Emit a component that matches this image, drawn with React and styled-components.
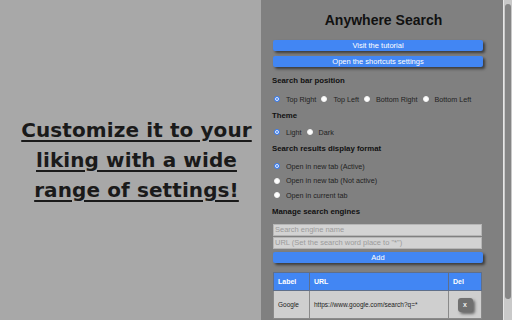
import styled, { createGlobalStyle } from 'styled-components';

const GlobalStyle = createGlobalStyle`
  html, body {
    margin: 0;
    padding: 0;
    width: 512px;
    height: 320px;
    overflow: hidden;
    background: #a8a8a8;
  }
`;

const Page = styled.div`
  display: flex;
  width: 512px;
  height: 320px;
`;

const Promo = styled.div`
  width: 261px;
  display: flex;
  align-items: center;
  justify-content: center;
  background: #a8a8a8;
`;

const PromoText = styled.h1`
  margin: 0;
  padding-left: 12px;
  font-family: "DejaVu Sans", sans-serif;
  font-size: 20px;
  font-weight: bold;
  line-height: 30px;
  letter-spacing: 0.1px;
  text-align: center;
  text-decoration: underline;
  text-decoration-thickness: 1.5px;
  text-underline-offset: 3px;
  color: #1a1a1a;
`;

const Panel = styled.div`
  width: 242px;
  padding: 12px 20px 0 11px;
  box-sizing: border-box;
  display: flex;
  flex-direction: column;
  background: #808080;
  font-family: "Liberation Sans", Arial, sans-serif;
  color: #111;
`;

const Title = styled.h2`
  margin: 0;
  font-size: 14px;
  line-height: 16px;
  text-align: center;
  padding-left: 12px;
  color: #111;
`;

const Button = styled.button`
  display: block;
  margin: ${p => p.$mt}px 0 0 1px;
  height: 11px;
  width: 210px;
  padding: 0;
  border: none;
  border-radius: 2px;
  background: #4286f3;
  color: #fff;
  font-family: "Liberation Sans", Arial, sans-serif;
  font-size: 7.5px;
  line-height: 11px;
  box-shadow: 2px 2px 3px rgba(0, 0, 0, 0.55);
`;

const SectionTitle = styled.div`
  margin-top: ${p => p.$mt}px;
  font-size: 7.8px;
  font-weight: bold;
  line-height: 10px;
  color: #111;
`;

const RadioRow = styled.div`
  display: flex;
  gap: 5px;
  margin-top: ${p => p.$mt}px;
  padding-left: 2px;
`;

const RadioList = styled.div`
  display: flex;
  flex-direction: column;
  gap: 4.5px;
  margin-top: 7px;
  padding-left: 2px;
`;

const Option = styled.label`
  display: flex;
  align-items: center;
  height: 10px;
  gap: 6px;
  font-size: 7.2px;
  color: #222;
`;

const Radio = styled.span`
  width: 6px;
  height: 6px;
  border-radius: 50%;
  box-sizing: border-box;
  border: ${p => (p.$on ? '1.5px solid #3d7ff0' : '1px solid #f2f2f2')};
  box-shadow: ${p => (p.$on ? 'inset 0 0 0 1px #fff' : 'none')};
  background: ${p => (p.$on ? '#3d7ff0' : '#fff')};
`;

const Inputs = styled.div`
  display: flex;
  flex-direction: column;
  gap: 1px;
  margin-top: 7px;
  margin-left: 1px;
`;

const Field = styled.div`
  height: 12px;
  width: 209px;
  box-sizing: border-box;
  border: 1px solid #b6b6b6;
  background: #d3d3d3;
  color: #9b9b9b;
  font-size: 7.5px;
  line-height: 10px;
  padding-left: 1px;
`;

const Table = styled.table`
  margin: 9px 0 0 1px;
  width: 209px;
  border-collapse: collapse;
  font-size: 6.5px;
`;

const Th = styled.th`
  height: 17px;
  padding: 0 0 0 4px;
  background: #4286f3;
  color: #fff;
  font-size: 7px;
  text-align: ${p => (p.$center ? 'center' : 'left')};
  border: 1px solid #5f6f8a;
  width: ${p => p.$w}px;
`;

const Td = styled.td`
  height: 27px;
  padding: 0 0 0 4px;
  background: #cfcfcf;
  color: #222;
  text-align: ${p => (p.$center ? 'center' : 'left')};
  border: 1px solid #8a8a8a;
`;

const DelButton = styled.span`
  display: inline-block;
  width: 15px;
  height: 14px;
  border-radius: 3px;
  background: #707070;
  color: #eee;
  font-size: 7px;
  font-weight: bold;
  line-height: 13px;
  text-align: center;
  box-shadow: 2px 2px 3px rgba(0, 0, 0, 0.5);
  margin-left: -4px;
`;

const ScrollTrack = styled.div`
  width: 9px;
  background: #c9c9c9;
  border-left: 1px solid #e6e6e6;
  box-sizing: border-box;
  padding: 4px 1px 0 1px;
`;

const ScrollThumb = styled.div`
  height: 295px;
  border-radius: 3px;
  background: #858585;
`;

const positions = ['Top Right', 'Top Left', 'Bottom Right', 'Bottom Left'];
const formats = ['Open in new tab (Active)', 'Open in new tab (Not active)', 'Open in current tab'];

export default function App() {
  return (
    <>
      <GlobalStyle />
      <Page>
        <Promo>
          <PromoText>
            Customize it to your<br />liking with a wide<br />range of settings!
          </PromoText>
        </Promo>
        <Panel>
          <Title>Anywhere Search</Title>
          <Button $mt={12}>Visit the tutorial</Button>
          <Button $mt={5}>Open the shortcuts settings</Button>

          <SectionTitle $mt={9}>Search bar position</SectionTitle>
          <RadioRow $mt={8}>
            {positions.map((p, i) => (
              <Option key={p}><Radio $on={i === 0} />{p}</Option>
            ))}
          </RadioRow>

          <SectionTitle $mt={7}>Theme</SectionTitle>
          <RadioRow $mt={6}>
            <Option><Radio $on />Light</Option>
            <Option><Radio />Dark</Option>
          </RadioRow>

          <SectionTitle $mt={7}>Search results display format</SectionTitle>
          <RadioList>
            {formats.map((f, i) => (
              <Option key={f}><Radio $on={i === 0} />{f}</Option>
            ))}
          </RadioList>

          <SectionTitle $mt={7}>Manage search engines</SectionTitle>
          <Inputs>
            <Field>Search engine name</Field>
            <Field>URL (Set the search word place to "*")</Field>
          </Inputs>
          <Button $mt={3}>Add</Button>

          <Table>
            <thead>
              <tr>
                <Th $w={31}>Label</Th>
                <Th $w={134}>URL</Th>
                <Th $w={28}>Del</Th>
              </tr>
            </thead>
            <tbody>
              <tr>
                <Td>Google</Td>
                <Td>https://www.google.com/search?q=*</Td>
                <Td $center><DelButton>x</DelButton></Td>
              </tr>
            </tbody>
          </Table>
        </Panel>
        <ScrollTrack>
          <ScrollThumb />
        </ScrollTrack>
      </Page>
    </>
  );
}
